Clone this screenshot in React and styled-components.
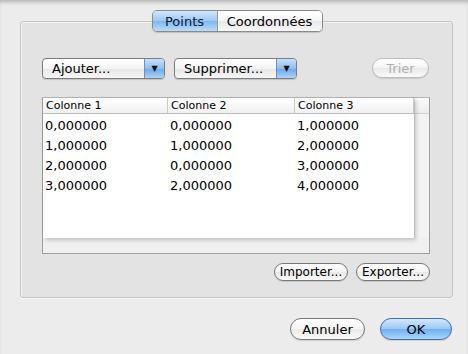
import React from 'react';
import styled, { createGlobalStyle, css } from 'styled-components';

const GlobalStyle = createGlobalStyle`
  html, body {
    margin: 0;
    padding: 0;
    background: #ececec;
  }
  * {
    box-sizing: border-box;
  }
`;

const Sheet = styled.div`
  width: 468px;
  height: 354px;
  background: #ececec;
  box-shadow: inset 0 4px 4px -2px rgba(0, 0, 0, 0.25);
  font-family: 'DejaVu Sans', 'Liberation Sans', sans-serif;
  font-size: 13px;
  color: #000;
  padding: 10px 16px 0 20px;
  display: flex;
  flex-direction: column;
`;

const TabView = styled.div`
  display: flex;
  flex-direction: column;
  align-items: center;
  width: 433px;
`;

const Segmented = styled.div`
  display: flex;
  height: 22px;
  margin-left: 1px;
  border: 1px solid #8a8a8a;
  border-radius: 5px;
  overflow: hidden;
  position: relative;
  z-index: 1;
  box-shadow: 0 1px 1px rgba(0, 0, 0, 0.15);
`;

const Segment = styled.div`
  height: 100%;
  display: flex;
  align-items: center;
  justify-content: center;
  width: ${({ $w }) => $w}px;
  background: linear-gradient(#ffffff 0%, #f6f6f6 50%, #e8e8e8 51%, #f8f8f8 100%);
  ${({ $active }) => $active && css`
    background: linear-gradient(#cfe5fb 0%, #9ccaf5 50%, #7db7ef 51%, #b9dcfb 100%);
    color: #0a1a3a;
  `}
  & + & {
    border-left: 1px solid #9a9a9a;
  }
`;

const GroupBox = styled.div`
  margin-top: -11px;
  width: 433px;
  height: 277px;
  border: 1px solid #c4c4c4;
  border-radius: 3px;
  background: #e3e3e3;
  box-shadow: inset 1px 1px 0 #f3f3f3, 0 1px 0 #f6f6f6;
  padding: 35px 22px 0 21px;
  display: flex;
  flex-direction: column;
`;

const ControlsRow = styled.div`
  display: flex;
  align-items: center;
  gap: 9px;
  height: 22px;
`;

const Popup = styled.div`
  width: 123px;
  height: 21px;
  border: 1px solid #7c7c7c;
  border-radius: 4px;
  display: flex;
  overflow: hidden;
  background: linear-gradient(#ffffff 0%, #f4f4f4 50%, #e6e6e6 51%, #f6f6f6 100%);
  box-shadow: 0 1px 1px rgba(0, 0, 0, 0.15);
`;

const PopupLabel = styled.div`
  flex: 1;
  padding-left: 9px;
  display: flex;
  align-items: center;
`;

const PopupArrow = styled.div`
  width: 20px;
  border-left: 1px solid #6c8fbf;
  background: linear-gradient(#c7e0f8 0%, #8ebfee 50%, #6aa8e6 51%, #a9d3fa 100%);
  display: flex;
  align-items: center;
  justify-content: center;
  font-size: 8px;
  color: #111;
`;

const Spacer = styled.div`
  flex: 1;
`;

const PillButton = styled.div`
  height: ${({ $h }) => $h || 19}px;
  width: ${({ $w }) => $w}px;
  border: 1px solid ${({ $disabled }) => ($disabled ? '#bdbdbd' : '#777')};
  border-radius: 11px;
  display: flex;
  align-items: center;
  justify-content: center;
  font-size: ${({ $fs }) => $fs || 12}px;
  color: ${({ $disabled }) => ($disabled ? '#b0b0b0' : '#000')};
  background: linear-gradient(#ffffff 0%, #f5f5f5 50%, #e9e9e9 51%, #fafafa 100%);
  box-shadow: 0 1px 1px rgba(0, 0, 0, 0.12);
  ${({ $primary }) => $primary && css`
    border-color: #3f6ea8;
    background: linear-gradient(#d3e8fc 0%, #98c8f4 50%, #6fb0ee 51%, #a8d6ff 100%);
  `}
`;

const TrierWrap = styled.div`
  margin-right: 1px;
`;

const ScrollView = styled.div`
  margin-top: 18px;
  width: 388px;
  height: 157px;
  border: 1px solid #9f9f9f;
  border-top-color: #b5b5b5;
  background: #f4f4f4;
  display: grid;
  grid-template-columns: 1fr 15px;
  grid-template-rows: 1fr 15px;
`;

const TableArea = styled.div`
  background: #fff;
  box-shadow: 2px 2px 4px rgba(0, 0, 0, 0.2);
  position: relative;
  z-index: 0;
`;

const HeaderRow = styled.div`
  display: grid;
  grid-template-columns: 125px 127px 1fr;
  height: 16px;
  background: linear-gradient(#ffffff, #f0f0f0);
  border-bottom: 1px solid #bdbdbd;
`;

const HeaderCell = styled.div`
  font-size: 11px;
  padding-left: 3px;
  line-height: 15px;
  border-right: 1px solid #c9c9c9;
`;

const Row = styled.div`
  display: grid;
  grid-template-columns: 125px 127px 1fr;
  height: 20px;
  align-items: center;
`;

const Cell = styled.div`
  padding-left: 2px;
`;

const VScroll = styled.div`
  background: #f3f3f3;
  border-left: 1px solid #e0e0e0;
`;

const Corner = styled.div`
  height: 16px;
  background: linear-gradient(#fafafa, #ededed);
  border-bottom: 1px solid #cfcfcf;
`;

const HScroll = styled.div`
  background: #f0f0f0;
  grid-column: 1 / 3;
`;

const Body = styled.div`
  display: flex;
  flex-direction: column;
  padding-top: 1px;
`;

const ActionsRow = styled.div`
  margin-top: 9px;
  width: 388px;
  display: flex;
  justify-content: flex-end;
  gap: 8px;
`;

const Footer = styled.div`
  margin-top: 20px;
  width: 432px;
  display: flex;
  justify-content: flex-end;
  gap: 15px;
`;

const points = [
  ['0,000000', '0,000000', '1,000000'],
  ['1,000000', '1,000000', '2,000000'],
  ['2,000000', '0,000000', '3,000000'],
  ['3,000000', '2,000000', '4,000000'],
];

export default function App() {
  return (
    <Sheet>
      <GlobalStyle />
      <TabView>
        <Segmented>
          <Segment $w={64} $active>Points</Segment>
          <Segment $w={105}>Coordonnées</Segment>
        </Segmented>
        <GroupBox>
          <ControlsRow>
            <Popup>
              <PopupLabel>Ajouter...</PopupLabel>
              <PopupArrow>▼</PopupArrow>
            </Popup>
            <Popup>
              <PopupLabel>Supprimer...</PopupLabel>
              <PopupArrow>▼</PopupArrow>
            </Popup>
            <Spacer />
            <TrierWrap>
              <PillButton $w={57} $h={20} $fs={13} $disabled>Trier</PillButton>
            </TrierWrap>
          </ControlsRow>
          <ScrollView>
            <TableArea>
              <HeaderRow>
                <HeaderCell>Colonne 1</HeaderCell>
                <HeaderCell>Colonne 2</HeaderCell>
                <HeaderCell>Colonne 3</HeaderCell>
              </HeaderRow>
              <Body>
                {points.map((r, i) => (
                  <Row key={i}>
                    {r.map((v, j) => <Cell key={j}>{v}</Cell>)}
                  </Row>
                ))}
              </Body>
            </TableArea>
            <VScroll>
              <Corner />
            </VScroll>
            <HScroll />
          </ScrollView>
          <ActionsRow>
            <PillButton $w={74} $h={18}>Importer...</PillButton>
            <PillButton $w={74} $h={18}>Exporter...</PillButton>
          </ActionsRow>
        </GroupBox>
      </TabView>
      <Footer>
        <PillButton $w={75} $h={22} $fs={13}>Annuler</PillButton>
        <PillButton $w={72} $h={22} $fs={13} $primary>OK</PillButton>
      </Footer>
    </Sheet>
  );
}
